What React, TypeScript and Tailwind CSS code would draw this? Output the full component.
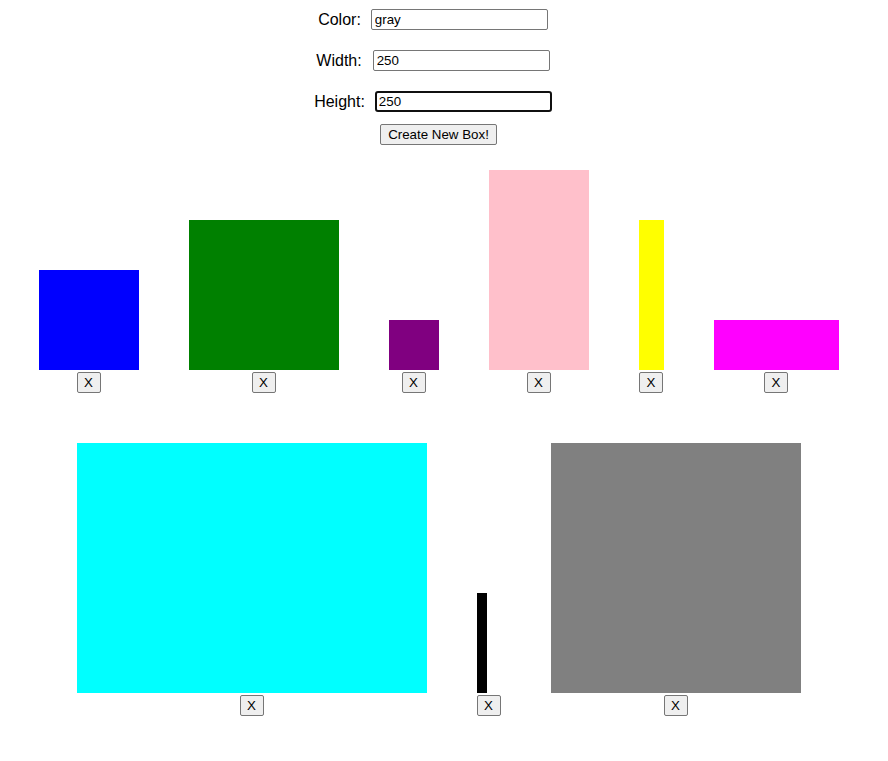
import { useState } from "react";

type Box = { id: number; color: string; width: number; height: number };

const initialBoxes: Box[] = [
  { id: 1, color: "blue", width: 100, height: 100 },
  { id: 2, color: "green", width: 150, height: 150 },
  { id: 3, color: "purple", width: 50, height: 50 },
  { id: 4, color: "pink", width: 100, height: 200 },
  { id: 5, color: "yellow", width: 25, height: 150 },
  { id: 6, color: "magenta", width: 125, height: 50 },
  { id: 7, color: "cyan", width: 350, height: 250 },
  { id: 8, color: "black", width: 10, height: 100 },
  { id: 9, color: "gray", width: 250, height: 250 },
];

const ui = "[font-family:'Liberation_Sans',Arial,sans-serif]";

export default function App() {
  const [boxes, setBoxes] = useState<Box[]>(initialBoxes);
  const [color, setColor] = useState("gray");
  const [width, setWidth] = useState("250");
  const [height, setHeight] = useState("250");

  const addBox = () => {
    setBoxes([...boxes, { id: Date.now(), color, width: Number(width), height: Number(height) }]);
  };

  return (
    <div className={`w-[876px] bg-white text-black ${ui}`}>
      <div className="flex flex-col items-center pt-[9px] pl-[1px]">
        <div className="flex items-center h-[21px] pr-[11px]">
          <label className="text-[16px]">Color:</label>
          <input
            value={color}
            onChange={(e) => setColor(e.target.value)}
            className="ml-[10px] w-[177px] h-[21px] px-[3px] text-[13.33px] border border-[#767676] rounded-[2px] outline-none"
          />
        </div>
        <div className="flex items-center h-[21px] pr-[11px] mt-[20px]">
          <label className="text-[16px]">Width:</label>
          <input
            value={width}
            onChange={(e) => setWidth(e.target.value)}
            className="ml-[11px] w-[177px] h-[21px] px-[3px] text-[13.33px] border border-[#767676] rounded-[2px] outline-none"
          />
        </div>
        <div className="flex items-center h-[21px] pr-[11px] mt-[20px]">
          <label className="text-[16px]">Height:</label>
          <input
            value={height}
            onChange={(e) => setHeight(e.target.value)}
            className="ml-[10px] w-[177px] h-[21px] px-[2px] text-[13.33px] border-2 border-[#101010] rounded-[3px] outline-none"
          />
        </div>
        <button
          onClick={addBox}
          className="mt-[12px] w-[117px] h-[21px] text-[13.33px] bg-[#efefef] border border-[#767676] rounded-[2px] leading-none"
        >
          Create New Box!
        </button>
      </div>

      <div className="flex flex-wrap justify-center items-end pl-[1px]">
        {boxes.map((box) => (
          <div key={box.id} className="flex flex-col m-[25px]">
            <div style={{ backgroundColor: box.color, width: box.width, height: box.height }} />
            <button
              onClick={() => setBoxes(boxes.filter((b) => b.id !== box.id))}
              className="self-center mt-[2px] w-[24px] h-[21px] text-[13.33px] bg-[#efefef] border border-[#767676] rounded-[2px] leading-none"
            >
              X
            </button>
          </div>
        ))}
      </div>
    </div>
  );
}
